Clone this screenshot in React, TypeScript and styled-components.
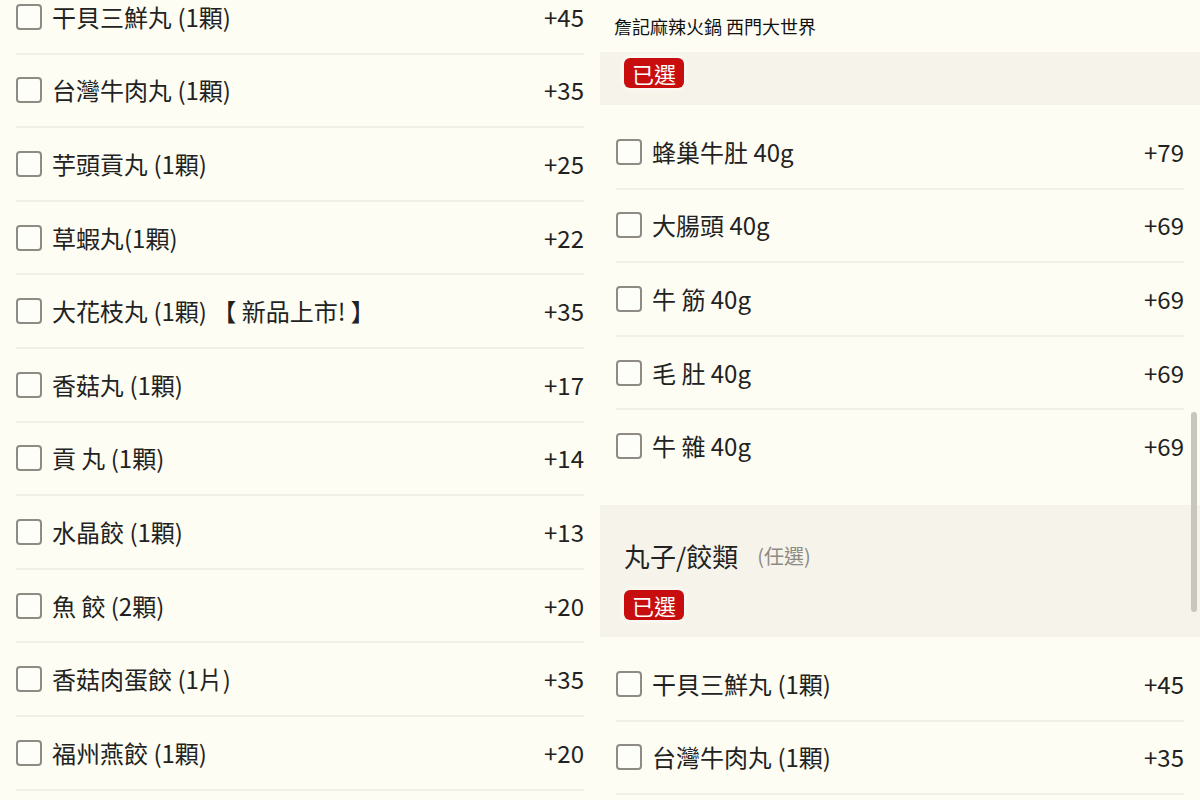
import styled, { createGlobalStyle } from 'styled-components'

const GlobalStyle = createGlobalStyle`
  html, body {
    margin: 0;
    padding: 0;
    background: #fdfdf3;
  }
  body {
    font-family: "Noto Sans CJK TC", "Noto Sans", sans-serif;
    color: #222;
  }
`

const Page = styled.div`
  display: grid;
  grid-template-columns: 600px 600px;
  width: 1200px;
  height: 800px;
  overflow: hidden;
`

const Panel = styled.div`
  position: relative;
  height: 800px;
  overflow: hidden;
  background: #fdfdf3;
`

// scrolled list: top row is partly above the fold
const ScrolledList = styled.div<{ offset: number }>`
  margin-top: ${({ offset }) => -offset}px;
  padding: 0 16px;
`

const ItemList = styled.div`
  padding: 11px 16px 21px;
`

const Row = styled.div<{ last?: boolean }>`
  display: flex;
  align-items: center;
  height: 73.6px;
  box-sizing: border-box;
  border-bottom: 2px solid ${({ last }) => (last ? 'transparent' : '#f1f0e5')};
`

const Check = styled.span`
  width: 26px;
  height: 26px;
  box-sizing: border-box;
  border: 2px solid #8d8b84;
  border-radius: 4px;
  flex: 0 0 auto;
  margin-right: 10px;
  background: #fefef8;
`

const Name = styled.span`
  flex: 1;
  font-size: 24px;
  line-height: 30px;
  white-space: pre;
`

const Price = styled.span`
  font-size: 24px;
  line-height: 30px;
`

const StoreHeader = styled.div`
  height: 52px;
  display: flex;
  align-items: center;
  padding: 0 14px;
  font-size: 18px;
  font-weight: 400;
  color: #111;
`

const SectionHead = styled.div<{ compact?: boolean }>`
  background: #f6f4ea;
  padding: ${({ compact }) => (compact ? '6px 24px 17px' : '33px 24px 17px')};
  display: flex;
  flex-direction: column;
  align-items: flex-start;
  gap: 16px;
`

const SectionTitle = styled.div`
  display: flex;
  align-items: center;
  gap: 19px;
  height: 36px;
  font-size: 26px;
  line-height: 36px;
`

const Optional = styled.span`
  font-size: 20px;
  line-height: 36px;
  color: #8c8a85;
`

const Badge = styled.span`
  display: inline-flex;
  align-items: center;
  justify-content: center;
  height: 30px;
  padding: 0 8px;
  border-radius: 6px;
  background: #c70d0d;
  color: #fff;
  font-size: 22px;
  line-height: 30px;
  box-shadow: 0 0 6px rgba(255, 255, 255, 0.9);
`

const ScrollThumb = styled.div`
  position: absolute;
  right: 3px;
  top: 412px;
  width: 6px;
  height: 200px;
  border-radius: 3px;
  background: #c9c6be;
`

type Item = { name: string; price: number }

const leftItems: Item[] = [
  { name: '干貝三鮮丸 (1顆)', price: 45 },
  { name: '台灣牛肉丸 (1顆)', price: 35 },
  { name: '芋頭貢丸 (1顆)', price: 25 },
  { name: '草蝦丸(1顆)', price: 22 },
  { name: '大花枝丸 (1顆) 【 新品上市! 】', price: 35 },
  { name: '香菇丸 (1顆)', price: 17 },
  { name: '貢 丸 (1顆)', price: 14 },
  { name: '水晶餃 (1顆)', price: 13 },
  { name: '魚 餃 (2顆)', price: 20 },
  { name: '香菇肉蛋餃 (1片)', price: 35 },
  { name: '福州燕餃 (1顆)', price: 20 },
]

const tripeItems: Item[] = [
  { name: '蜂巢牛肚 40g', price: 79 },
  { name: '大腸頭 40g', price: 69 },
  { name: '牛 筋 40g', price: 69 },
  { name: '毛 肚 40g', price: 69 },
  { name: '牛 雜 40g', price: 69 },
]

const ballItems: Item[] = [
  { name: '干貝三鮮丸 (1顆)', price: 45 },
  { name: '台灣牛肉丸 (1顆)', price: 35 },
]

const ItemRow = ({ item, last }: { item: Item; last?: boolean }) => (
  <Row last={last}>
    <Check />
    <Name>{item.name}</Name>
    <Price>+{item.price}</Price>
  </Row>
)

const App = () => {
  return (
    <>
      <GlobalStyle />
      <Page>
        <Panel>
          <ScrolledList offset={19}>
            {leftItems.map((item) => (
              <ItemRow key={item.name} item={item} />
            ))}
          </ScrolledList>
        </Panel>
        <Panel>
          <StoreHeader>詹記麻辣火鍋 西門大世界</StoreHeader>
          <SectionHead compact>
            <Badge>已選</Badge>
          </SectionHead>
          <ItemList>
            {tripeItems.map((item, i) => (
              <ItemRow key={item.name} item={item} last={i === tripeItems.length - 1} />
            ))}
          </ItemList>
          <SectionHead>
            <SectionTitle>
              丸子/餃類
              <Optional>(任選)</Optional>
            </SectionTitle>
            <Badge>已選</Badge>
          </SectionHead>
          <ItemList>
            {ballItems.map((item) => (
              <ItemRow key={item.name} item={item} />
            ))}
          </ItemList>
          <ScrollThumb />
        </Panel>
      </Page>
    </>
  )
}

export default App
